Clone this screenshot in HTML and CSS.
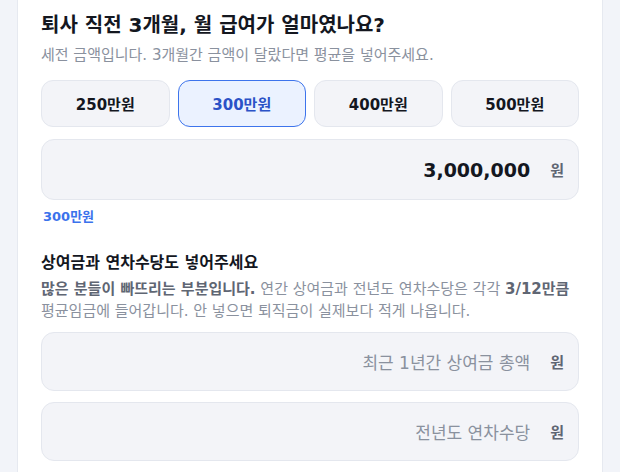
FILE: index.html
```html
<!DOCTYPE html>
<html lang="ko">
<head>
<meta charset="utf-8">
<link rel="stylesheet" href="styles.css">
</head>
<body>
<main class="card">
  <h2 class="q-title">퇴사 직전 3개월, 월 급여가 얼마였나요?</h2>
  <p class="q-desc">세전 금액입니다. 3개월간 금액이 달랐다면 평균을 넣어주세요.</p>
  <div class="chips">
    <button class="chip">250만원</button>
    <button class="chip chip-on">300만원</button>
    <button class="chip">400만원</button>
    <button class="chip">500만원</button>
  </div>
  <label class="field">
    <span class="field-value">3,000,000</span>
    <span class="field-unit">원</span>
  </label>
  <div class="hint">300만원</div>

  <h3 class="s-title">상여금과 연차수당도 넣어주세요</h3>
  <p class="s-desc"><strong>많은 분들이 빠뜨리는 부분입니다.</strong> 연간 상여금과 전년도 연차수당은 각각 <strong>3/12만큼</strong> 평균임금에 들어갑니다. 안 넣으면 퇴직금이 실제보다 적게 나옵니다.</p>
  <div class="fields">
    <label class="field field-sm">
      <span class="field-ph">최근 1년간 상여금 총액</span>
      <span class="field-unit">원</span>
    </label>
    <label class="field field-sm">
      <span class="field-ph">전년도 연차수당</span>
      <span class="field-unit">원</span>
    </label>
  </div>
</main>
</body>
</html>
```
FILE: styles.css
```css
* { box-sizing: border-box; }
html, body { margin: 0; padding: 0; }
body {
  background: #f2f4f9;
  font-family: "DejaVu Sans", "Noto Sans CJK KR", sans-serif;
  color: #14171f;
}
.card {
  margin: 0 17px;
  background: #fff;
  border: 1px solid #e6e9f0;
  border-top: 0;
  padding: 11px 23px 20px;
  min-height: 472px;
}
.q-title {
  margin: 0;
  font-size: 20px;
  line-height: 28px;
  font-weight: 700;
  color: #14171f;
}
.q-desc {
  margin: 5px 0 0;
  font-size: 15px;
  line-height: 22px;
  color: #8a919e;
}
.chips {
  display: grid;
  grid-template-columns: repeat(4, 1fr);
  gap: 8px;
  margin-top: 14px;
}
.chip {
  height: 47px;
  border: 1px solid #e4e7ee;
  background: #f3f4f8;
  border-radius: 12px;
  font-family: inherit;
  font-size: 15px;
  font-weight: 700;
  color: #14171f;
  padding: 0;
}
.chip-on {
  background: #ebf2ff;
  border-color: #3d74ec;
  color: #2b52c7;
}
.field {
  display: flex;
  align-items: center;
  justify-content: flex-end;
  gap: 20px;
  height: 61px;
  margin-top: 12px;
  padding: 0 14px 0 15px;
  background: #f3f4f8;
  border: 1px solid #e4e7ee;
  border-radius: 13px;
}
.field-value {
  font-size: 19px;
  font-weight: 700;
  color: #14171f;
}
.field-unit {
  font-size: 15px;
  font-weight: 700;
  color: #5f6673;
}
.hint {
  margin: 8px 0 0 2px;
  font-size: 13px;
  line-height: 18px;
  font-weight: 700;
  color: #3b72ec;
}
.s-title {
  margin: 25px 0 0;
  font-size: 16px;
  line-height: 24px;
  font-weight: 700;
  color: #14171f;
}
.s-desc {
  margin: 3px 0 0;
  font-size: 15px;
  line-height: 22px;
  color: #8a919e;
}
.s-desc strong { color: #5f6673; font-weight: 700; }
.fields {
  display: flex;
  flex-direction: column;
  gap: 11px;
  margin-top: 10px;
}
.field-sm { height: 59px; margin-top: 0; }
.field-ph {
  font-size: 17px;
  color: #8a919e;
}
```
